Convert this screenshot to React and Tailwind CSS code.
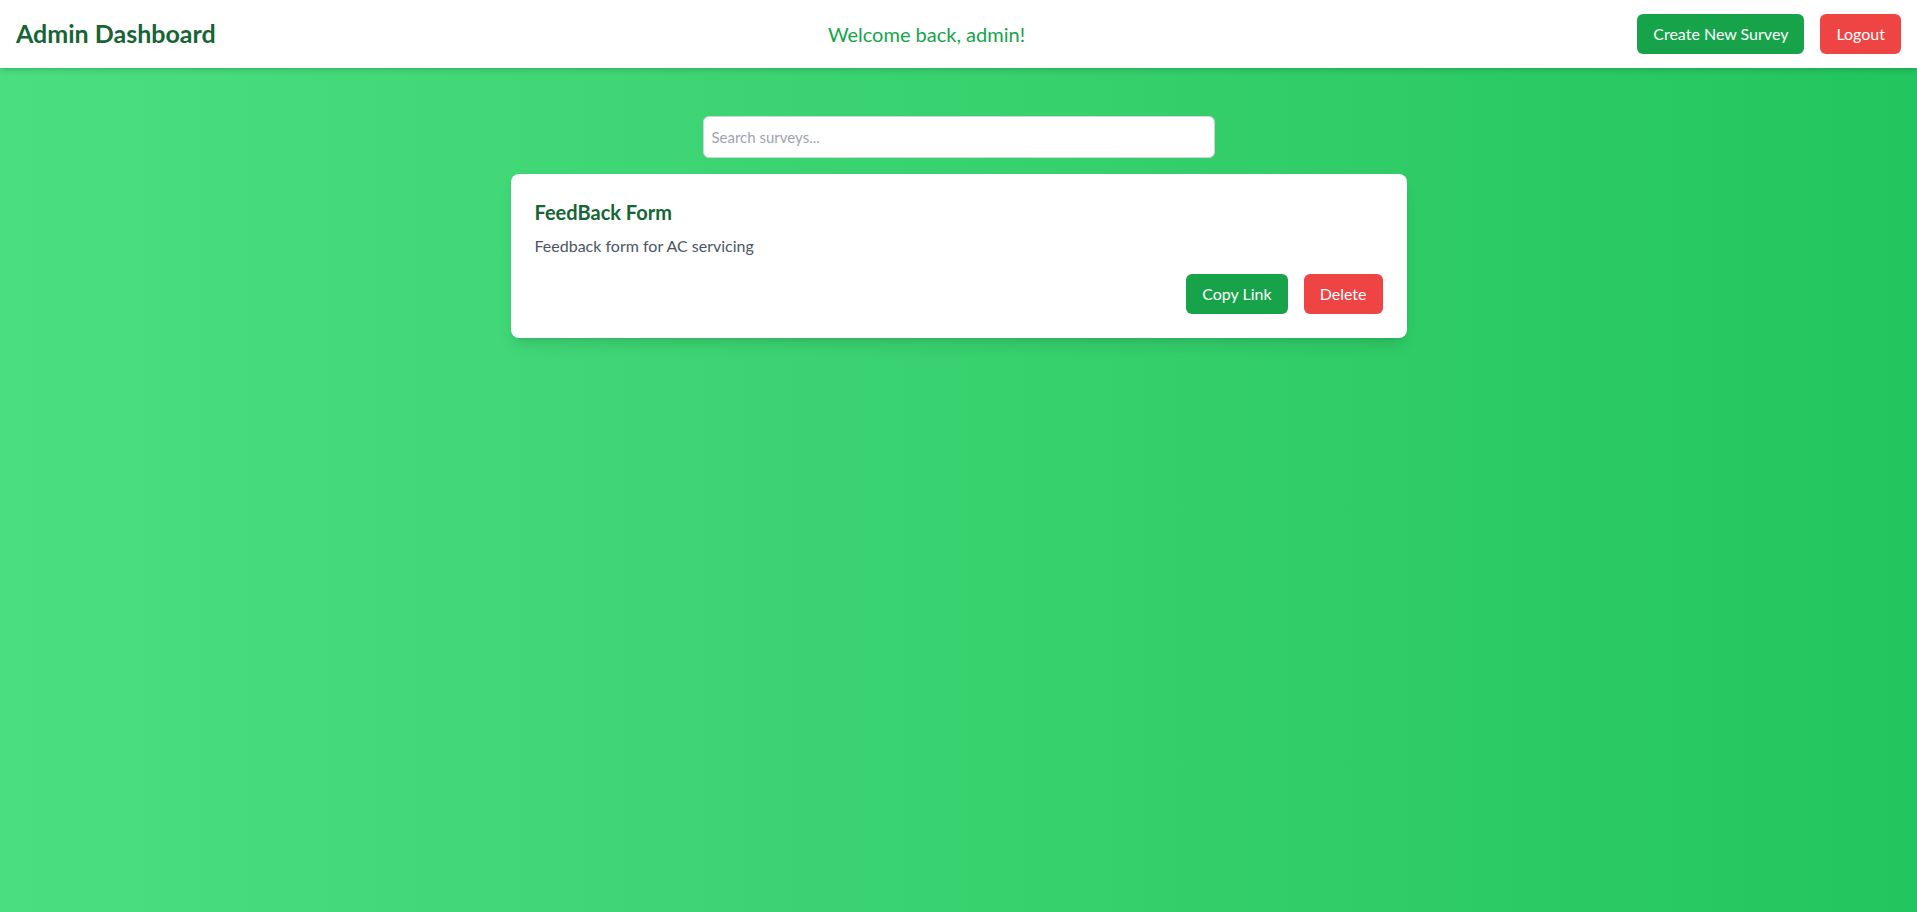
import React, { useState } from 'react';

const surveys = [
  { id: 1, title: 'FeedBack Form', description: 'Feedback form for AC servicing' },
];

export default function App() {
  const [query, setQuery] = useState('');

  const filtered = surveys.filter((s) =>
    s.title.toLowerCase().includes(query.toLowerCase())
  );

  return (
    <div
      className="min-h-screen bg-linear-to-r from-[#4ade80] to-[#22c55e]"
      style={{ fontFamily: '"Segoe UI", Lato, "Open Sans", sans-serif' }}
    >
      {/* Top bar */}
      <header className="bg-white shadow-md h-[68px] px-4 flex items-center justify-between">
        <h1 className="text-[25px] font-bold text-[#166534]">Admin Dashboard</h1>
        <p className="text-xl text-[#16a34a]">Welcome back, admin!</p>
        <div className="flex items-center gap-4">
          <button className="bg-[#16a34a] text-white px-4 py-2 rounded-md">Create New Survey</button>
          <button className="bg-[#ef4444] text-white px-4 py-2 rounded-md">Logout</button>
        </div>
      </header>

      {/* Survey list */}
      <main className="pt-12 px-4 flex flex-col items-center">
        <input
          type="text"
          value={query}
          onChange={(e) => setQuery(e.target.value)}
          placeholder="Search surveys..."
          className="w-full max-w-lg mb-4 px-2 py-2 bg-white border border-[#d1d5db] rounded-md text-[15px] leading-6 placeholder-[#9ca3af] outline-none"
        />

        <div className="w-full max-w-4xl flex flex-col gap-4">
          {filtered.map((survey) => (
            <div key={survey.id} className="bg-white rounded-lg shadow-lg p-6">
              <h2 className="text-xl font-bold text-[#166534]">{survey.title}</h2>
              <p className="mt-2 text-[#4b5563]">{survey.description}</p>
              <div className="mt-4 flex justify-end gap-4">
                <button className="bg-[#16a34a] text-white px-4 py-2 rounded-md">Copy Link</button>
                <button className="bg-[#ef4444] text-white px-4 py-2 rounded-md">Delete</button>
              </div>
            </div>
          ))}
        </div>
      </main>
    </div>
  );
}
